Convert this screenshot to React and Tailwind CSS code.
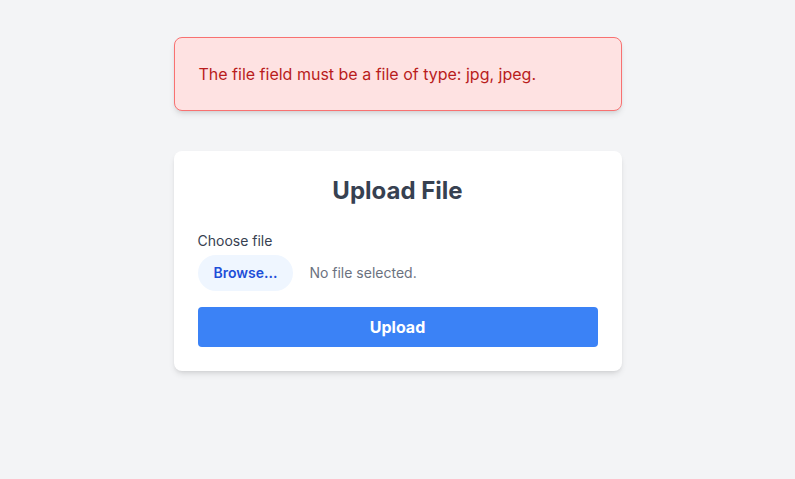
import { useState } from 'react';

export default function App() {
  const [fileName, setFileName] = useState(null);

  return (
    <div className="min-h-screen bg-[#f3f4f6] pt-[37px] font-['Inter',sans-serif]">
      <div className="mx-auto w-[448px]">
        <div className="mb-10 rounded-lg border border-[#f87171] bg-[#fee2e2] px-6 py-6 text-base text-[#b91c1c] shadow-md">
          The file field must be a file of type: jpg, jpeg.
        </div>

        <form
          className="rounded-lg bg-white p-6 shadow-md"
          onSubmit={(e) => e.preventDefault()}
        >
          <h1 className="mb-6 text-center text-2xl font-bold text-[#374151]">Upload File</h1>

          <label className="block text-sm text-[#374151]">Choose file</label>
          <label className="mt-1 flex cursor-pointer items-center">
            <input
              type="file"
              className="hidden"
              onChange={(e) => setFileName(e.target.files?.[0]?.name ?? null)}
            />
            <span className="mr-4 rounded-full bg-[#eff6ff] px-4 py-2 text-sm font-semibold text-[#1d4ed8]">
              Browse...
            </span>
            <span className="text-sm text-[#6b7280]">{fileName || 'No file selected.'}</span>
          </label>

          <button
            type="submit"
            className="mt-4 w-full rounded bg-[#3b82f6] py-2 text-base font-bold text-white"
          >
            Upload
          </button>
        </form>
      </div>
    </div>
  );
}
